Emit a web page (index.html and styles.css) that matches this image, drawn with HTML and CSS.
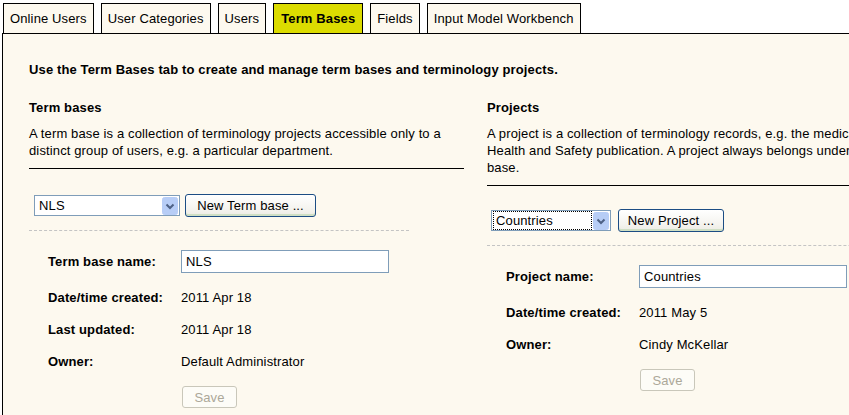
FILE: index.html
```html
<!DOCTYPE html>
<html lang="en">
<head>
<meta charset="utf-8">
<title>Term Bases</title>
<link rel="stylesheet" href="styles.css">
</head>
<body>
<nav class="tabs">
  <div class="tab">Online Users</div>
  <div class="tab">User Categories</div>
  <div class="tab">Users</div>
  <div class="tab active">Term Bases</div>
  <div class="tab">Fields</div>
  <div class="tab">Input Model Workbench</div>
</nav>
<main class="panel">
  <p class="intro">Use the Term Bases tab to create and manage term bases and terminology projects.</p>
  <div class="cols">
    <section class="col">
      <h3 class="col-title">Term bases</h3>
      <p class="desc">A term base is a collection of terminology projects accessible only to a distinct group of users, e.g. a particular department.</p>
      <hr class="rule">
      <div class="picker">
        <div class="select select-tb"><span class="val">NLS</span><span class="arrow"><svg width="16" height="18" viewBox="0 0 16 18"><rect x="0.5" y="0.5" width="15" height="17" rx="2" fill="#b7cdf6" stroke="#b7cdf6"/><path d="M4.5 7.5 L8 11 L11.5 7.5" fill="none" stroke="#4d6185" stroke-width="2"/></svg></span></div>
        <button class="btn btn-tb">New Term base ...</button>
      </div>
      <div class="sep"></div>
      <div class="form">
        <div class="lbl">Term base name:</div>
        <div><input class="field" type="text" value="NLS"></div>
        <div class="lbl">Date/time created:</div>
        <div class="val-text">2011 Apr 18</div>
        <div class="lbl">Last updated:</div>
        <div class="val-text">2011 Apr 18</div>
        <div class="lbl">Owner:</div>
        <div class="val-text">Default Administrator</div>
        <div></div>
        <div><button class="save" disabled>Save</button></div>
      </div>
    </section>
    <section class="col">
      <h3 class="col-title">Projects</h3>
      <p class="desc">A project is a collection of terminology records, e.g. the medical terms in a<br>Health and Safety publication. A project always belongs under a term<br>base.</p>
      <hr class="rule">
      <div class="picker picker-pr">
        <div class="select select-pr"><span class="val focus">Countries</span><span class="arrow"><svg width="16" height="18" viewBox="0 0 16 18"><rect x="0.5" y="0.5" width="15" height="17" rx="2" fill="#b7cdf6" stroke="#b7cdf6"/><path d="M4.5 7.5 L8 11 L11.5 7.5" fill="none" stroke="#4d6185" stroke-width="2"/></svg></span></div>
        <button class="btn btn-pr">New Project ...</button>
      </div>
      <div class="sep sep-pr"></div>
      <div class="form">
        <div class="lbl">Project name:</div>
        <div><input class="field" type="text" value="Countries"></div>
        <div class="lbl">Date/time created:</div>
        <div class="val-text">2011 May 5</div>
        <div class="lbl">Owner:</div>
        <div class="val-text">Cindy McKellar</div>
        <div></div>
        <div><button class="save" disabled>Save</button></div>
      </div>
    </section>
  </div>
</main>
</body>
</html>
```
FILE: styles.css
```css
html, body {
  overflow: hidden;
}
body {
  margin: 0;
  padding: 3px 0 0 2px;
  background: #ffffff;
  font-family: "Liberation Sans", Arial, sans-serif;
  font-size: 13px;
  letter-spacing: 0.13px;
  color: #000;
}
.tabs {
  display: flex;
  gap: 7px;
  margin-left: 1px;
}
.tab {
  height: 29px;
  display: flex;
  align-items: center;
  padding: 0 6px;
  border: 1px solid #000;
  border-bottom: 0;
  background: #fdf9ef;
  white-space: nowrap;
}
.tab.active {
  background: #dcdc00;
  font-weight: bold;
  padding: 0 7px;
}
.panel {
  border-top: 1px solid #000;
  border-left: 1px solid #000;
  background: #fdf9ef;
  padding: 28px 0 40px 26px;
  min-height: 400px;
}
.intro {
  margin: 0;
  line-height: 15px;
  font-weight: bold;
  white-space: nowrap;
}
.cols {
  display: flex;
  gap: 23px;
  margin-top: 23px;
}
.col {
  flex: 0 0 435px;
  width: 435px;
}
.col-title {
  margin: 0;
  font-size: 13px;
  line-height: 15px;
  font-weight: bold;
}
.desc {
  margin: 10px 0 0;
  line-height: 17px;
  white-space: nowrap;
}
.col:first-child .desc {
  white-space: normal;
}
.rule {
  margin: 9px 0 0;
  border: 0;
  border-top: 1px solid #000;
  height: 0;
}
.picker {
  display: flex;
  align-items: center;
  gap: 5px;
  margin-top: 25px;
  padding-left: 5px;
}
.picker-pr {
  margin-top: 23px;
  padding-left: 4px;
  gap: 7px;
}
.select {
  height: 19px;
  border: 1px solid #7f9db9;
  background: #fff;
  display: flex;
  align-items: center;
  justify-content: space-between;
  padding: 0 1px 0 2px;
}
.select-tb {
  width: 141px;
}
.select-pr {
  width: 115px;
}
.val {
  padding: 1px 2px;
  line-height: 15px;
}
.val.focus {
  outline: 1px dotted #000;
  outline-offset: 0;
  flex: 1;
  margin-right: 2px;
}
.arrow {
  display: flex;
}
.btn {
  height: 23px;
  border: 1px solid #1c4d84;
  border-radius: 3px;
  background: linear-gradient(#ffffff, #f4f3ee 70%, #ecebe3);
  box-shadow: inset 0 -2px 0 #cfdfc4;
  font-family: inherit;
  font-size: 13px;
  letter-spacing: 0.13px;
  color: #000;
  padding: 0 4px;
  white-space: nowrap;
}
.btn-tb {
  width: 131px;
}
.btn-pr {
  width: 106px;
}
.sep {
  width: 380px;
  border-top: 1px dashed #c4c4c4;
  margin-top: 13px;
}
.sep-pr {
  width: 500px;
}
.form {
  display: grid;
  grid-template-columns: 133px auto;
  row-gap: 17px;
  align-items: center;
  padding-left: 19px;
  margin-top: 19px;
}
.lbl {
  font-weight: bold;
  line-height: 15px;
}
.val-text {
  line-height: 15px;
}
.field {
  box-sizing: border-box;
  width: 208px;
  height: 23px;
  border: 1px solid #7f9db9;
  padding: 0 4px;
  font-family: inherit;
  font-size: 13px;
  letter-spacing: 0.13px;
  background: #fff;
  display: block;
}
.save {
  width: 55px;
  height: 22px;
  border: 1px solid #c9c7ba;
  border-radius: 3px;
  background: #fdfcf7;
  color: #aca899;
  font-family: inherit;
  font-size: 13px;
  letter-spacing: 0.13px;
  padding: 0;
  margin-left: 1px;
  display: block;
}
```
